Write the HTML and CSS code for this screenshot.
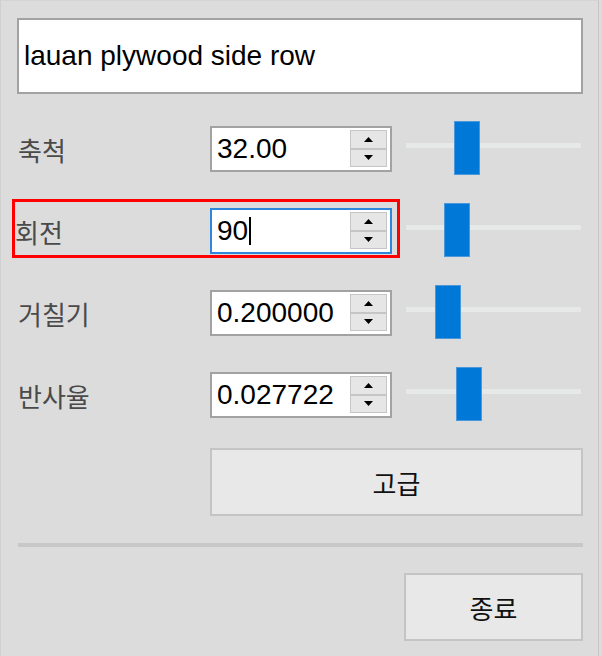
FILE: index.html
```html
<!DOCTYPE html>
<html lang="ko">
<head>
    <meta charset="UTF-8">
    <meta name="viewport" content="width=device-width, initial-scale=1.0">
    <title>재질</title>
    <link rel="stylesheet" href="styles.css">
</head>
<body>
    <div class="dialog">
        <div class="name-box">lauan plywood side row</div>

        <div class="props">
            <div class="row">
                <span class="label">축척</span>
                <div class="spinbox">
                    <div class="spin-value">32.00</div>
                    <div class="spin-btns">
                        <div class="spin-btn"><svg width="9" height="5" viewBox="0 0 9 5"><path d="M0 5 L4.5 0 L9 5 Z" fill="#000"/></svg></div>
                        <div class="spin-btn"><svg width="9" height="5" viewBox="0 0 9 5"><path d="M0 0 L9 0 L4.5 5 Z" fill="#000"/></svg></div>
                    </div>
                </div>
                <div class="slider">
                    <div class="track"></div>
                    <div class="thumb" style="left: 49px;"></div>
                </div>
            </div>

            <div class="row active">
                <span class="label">회전</span>
                <div class="spinbox focused">
                    <div class="spin-value">90<span class="caret"></span></div>
                    <div class="spin-btns">
                        <div class="spin-btn"><svg width="9" height="5" viewBox="0 0 9 5"><path d="M0 5 L4.5 0 L9 5 Z" fill="#000"/></svg></div>
                        <div class="spin-btn"><svg width="9" height="5" viewBox="0 0 9 5"><path d="M0 0 L9 0 L4.5 5 Z" fill="#000"/></svg></div>
                    </div>
                </div>
                <div class="slider">
                    <div class="track"></div>
                    <div class="thumb" style="left: 39px;"></div>
                </div>
            </div>

            <div class="row">
                <span class="label">거칠기</span>
                <div class="spinbox">
                    <div class="spin-value">0.200000</div>
                    <div class="spin-btns">
                        <div class="spin-btn"><svg width="9" height="5" viewBox="0 0 9 5"><path d="M0 5 L4.5 0 L9 5 Z" fill="#000"/></svg></div>
                        <div class="spin-btn"><svg width="9" height="5" viewBox="0 0 9 5"><path d="M0 0 L9 0 L4.5 5 Z" fill="#000"/></svg></div>
                    </div>
                </div>
                <div class="slider">
                    <div class="track"></div>
                    <div class="thumb" style="left: 30px;"></div>
                </div>
            </div>

            <div class="row">
                <span class="label">반사율</span>
                <div class="spinbox">
                    <div class="spin-value">0.027722</div>
                    <div class="spin-btns">
                        <div class="spin-btn"><svg width="9" height="5" viewBox="0 0 9 5"><path d="M0 5 L4.5 0 L9 5 Z" fill="#000"/></svg></div>
                        <div class="spin-btn"><svg width="9" height="5" viewBox="0 0 9 5"><path d="M0 0 L9 0 L4.5 5 Z" fill="#000"/></svg></div>
                    </div>
                </div>
                <div class="slider">
                    <div class="track"></div>
                    <div class="thumb" style="left: 51px;"></div>
                </div>
            </div>
        </div>

        <a class="btn advanced">고급</a>
        <div class="separator"></div>
        <a class="btn close">종료</a>
    </div>
</body>
</html>
```

FILE: styles.css
```css
*, *::before, *::after{
    padding: 0;
    margin: 0;
    box-sizing: border-box;
}
body{
    background: #dcdcdc;
    font-family: "Liberation Sans", Arial, sans-serif;
}
.dialog{
    display: flex;
    flex-direction: column;
    width: 599px;
    height: 656px;
    padding: 18px 15px 0 16px;
    border-left: 1px solid #d0d0d0;
    border-top: 1px solid #d4d4d4;
    border-right: 1px solid #c6c6c6;
}
.name-box{
    display: flex;
    align-items: center;
    height: 76px;
    margin-top: -1px;
    padding-left: 5px;
    background: white;
    border: 2px solid #a2a2a2;
    font-size: 28px;
    color: #000;
}
.props{
    display: flex;
    flex-direction: column;
    gap: 36px;
    margin-top: 32px;
}
.row{
    position: relative;
    display: grid;
    grid-template-columns: 193px 182px 1fr;
    align-items: center;
    height: 46px;
}
.row.active::before{
    content: "";
    position: absolute;
    left: -5px;
    top: -9px;
    width: 388px;
    height: 59px;
    border: 3px solid #ff0000;
    pointer-events: none;
}
.label{
    padding-left: 1px;
    font-family: "Noto Sans CJK KR", sans-serif;
    font-size: 26px;
    color: #4a4a4a;
}
.row.active .label{
    margin-left: -3px;
}
.spinbox{
    display: flex;
    height: 46px;
    background: white;
    border: 2px solid #a2a2a2;
}
.spinbox.focused{
    border-color: #2f87dd;
}
.spin-value{
    display: flex;
    align-items: center;
    flex: 1;
    padding-left: 5px;
    font-size: 28px;
    color: #000;
}
.caret{
    display: inline-block;
    width: 2px;
    height: 28px;
    margin-left: 1px;
    background: #000;
}
.spin-btns{
    display: flex;
    flex-direction: column;
    width: 37px;
    margin: 2px 3px 3px 0;
}
.spin-btn{
    display: flex;
    align-items: center;
    justify-content: center;
    flex: 1;
    background: #e6e6e6;
    border: 1px solid #c6c6c6;
}
.slider{
    position: relative;
    align-self: stretch;
    margin-left: 13px;
    margin-right: 1px;
}
.slider > .track{
    height: 7px;
    margin-top: 16px;
    background: #e7e9e9;
    border: 1px solid #dadcdc;
}
.slider > .thumb{
    position: absolute;
    top: -5px;
    width: 26px;
    height: 54px;
    background: #0078d7;
    border: 1px solid #4a98dc;
}
.btn{
    display: flex;
    align-items: center;
    justify-content: center;
    height: 68px;
    background: #e8e8e8;
    border: 2px solid #c4c4c4;
    font-family: "Noto Sans CJK KR", sans-serif;
    font-size: 26px;
    color: #111;
    cursor: pointer;
}
.advanced{
    margin-top: 30px;
    margin-left: 193px;
}
.separator{
    height: 4px;
    margin-top: 27px;
    margin-left: 1px;
    background: #c8c8c8;
}
.close{
    align-self: flex-end;
    width: 179px;
    margin-top: 26px;
}
```
